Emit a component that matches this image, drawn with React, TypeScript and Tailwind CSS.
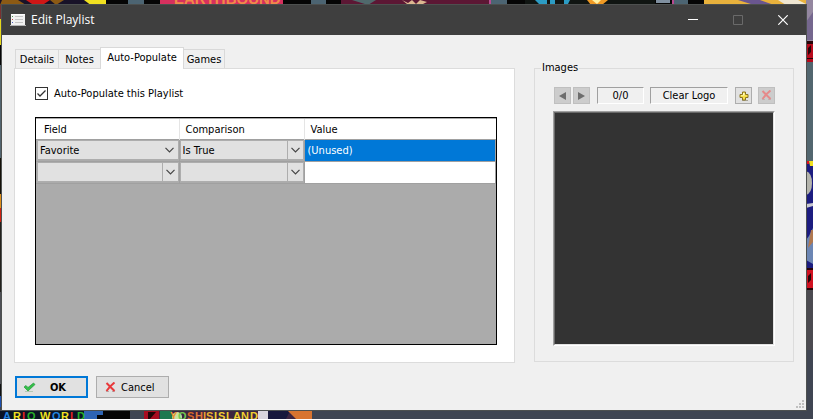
import React from 'react';

const CoverArt: React.FC = () => (
  <svg className="absolute inset-0 h-full w-full" viewBox="0 0 813 419" preserveAspectRatio="none" aria-hidden="true">
    <rect width="813" height="419" fill="#3f4552" />

    {/* covers along the top */}
    <rect width="813" height="6" fill="#050505" />
    <rect x="0" width="106" height="6" fill="#181228" />
    <path d="M2 0h16l8 5H0z" fill="#8c5a14" />
    <path d="M26 0h24l-6 4H32z" fill="#cf1616" />
    <path d="M50 0h14l-8 5z" fill="#8c5a14" />
    <path d="M84 0h22v6H92z" fill="#f0e020" />
    <rect x="128" width="16" height="6" fill="#4c6472" />
    <rect x="160" width="123" height="6" fill="#d6305e" />
    <text x="174" y="4" fontFamily="Liberation Sans" fontWeight="bold" fontSize="15" fill="#f08a4a">EARTHBOUND</text>
    <rect x="311" width="15" height="6" fill="#4c6472" />
    <rect x="341" width="150" height="6" fill="#5c1734" />
    <path d="M352 0h24l-8 5z" fill="#50696c" />
    <path d="M402 0l6 3 4-3 4 4 4-4 7 2-4 2h-16z" fill="#dcb890" />
    <rect x="491" width="16" height="6" fill="#4c6472" />
    <rect x="489" width="2" height="6" fill="#b84a90" />
    <rect x="525" width="130" height="6" fill="#101512" />
    <path d="M535 0h12v4h-8zM550 0h5v4h-5zM564 0h6l-2 4h-4z" fill="#2c9cc4" />
    <path d="M587 0h21l-6 5h-11z" fill="#f09a24" />
    <path d="M592 0h9l-4 4z" fill="#fff0a0" />
    <rect x="656" width="14" height="3" fill="#8090a0" />
    <rect x="672" width="2" height="6" fill="#b84a90" />
    <rect x="674" width="14" height="6" fill="#4c6472" />
    <rect x="704" width="109" height="6" fill="#e8b13c" />
    <path d="M738 0h22l14 5h-20z" fill="#6a5690" />
    <path d="M778 0h20l10 5h-22z" fill="#efe6d2" />

    {/* covers behind the left edge */}
    <rect y="5" width="2" height="14" fill="#7a3030" />
    <rect y="19" width="2" height="26" fill="#e6d81c" />
    <rect y="45" width="2" height="20" fill="#050505" />
    <rect y="65" width="2" height="93" fill="#52646f" />
    <rect y="158" width="2" height="36" fill="#141008" />
    <rect y="194" width="2" height="14" fill="#e0901a" />
    <rect y="208" width="2" height="14" fill="#d02010" />
    <rect y="222" width="2" height="70" fill="#22201c" />
    <rect y="292" width="2" height="92" fill="#4d4f55" />
    <rect y="384" width="2" height="12" fill="#101010" />
    <rect y="396" width="2" height="11" fill="#1c50b0" />

    {/* covers behind the right edge */}
    <rect x="806" width="7" height="41" fill="#9487a0" />
    <path d="M806 22l7-10v28h-7z" fill="#75678e" />
    <rect x="806" y="41" width="7" height="21" fill="#b80a1c" />
    <path d="M806 41h7v3h-7zM808 48l3-3v7l-3 3zM806 58h7v1h-7z" fill="#280408" />
    <rect x="806" y="62" width="7" height="99" fill="#52666f" />
    <rect x="806" y="161" width="7" height="107" fill="#1c1c80" />
    <path d="M806 161h3v3h-3z" fill="#e01020" />
    <path d="M809 161h4v5h-3z" fill="#f0e020" />
    <path d="M806 171q6 2 6 12t-6 12z" fill="#b4b4ac" />
    <path d="M806 204l7-1v3l-7 2z" fill="#c8c8d0" />
    <path d="M813 228l-4 8-3 4v20l7 4z" fill="#6c86b4" />
    <path d="M811 230h2v12l-5 6z" fill="#b07850" />
    <rect x="806" y="268" width="7" height="22" fill="#d01020" />
    <path d="M806 268h7v2h-7zM808 276l3-3v7l-3 3zM806 288h7v2h-7z" fill="#280408" />
    <rect x="806" y="290" width="7" height="60" fill="#4b4a50" />

    {/* covers along the bottom */}
    <rect y="411" width="87" height="8" fill="#0a1424" />
    <rect x="84" y="411" width="46" height="8" fill="#2e64b4" />
    <path d="M97 415h6v-4h27v8H97z" fill="#050505" />
    <rect x="144" y="411" width="168" height="8" fill="#3c2440" />
    <rect x="144" y="411" width="15" height="8" fill="#a80c20" />
    <path d="M148 412h8l-6 7h-2z" fill="#200408" />
    <rect x="160" y="411" width="12" height="8" fill="#1c7850" />
    <circle cx="177" cy="417" r="5" fill="#c4e49c" />
    <rect x="258" y="411" width="10" height="8" fill="#d8d4dc" />
    <path d="M268 411h22l-4 8h-18z" fill="#18183c" />
    <path d="M288 411h24v8h-16z" fill="#d87430" />
    <g fontFamily="Liberation Sans" fontWeight="bold" fontSize="11">
      <text y="420">
        <tspan x="3" fill="#2484e0">A</tspan>
        <tspan x="13" fill="#f0e020">R</tspan>
        <tspan x="22" fill="#e02020">I</tspan>
        <tspan x="27" fill="#28b028">O</tspan>
        <tspan x="40" fill="#f0e020">W</tspan>
        <tspan x="52" fill="#2484e0">O</tspan>
        <tspan x="61" fill="#f0e020">R</tspan>
        <tspan x="70" fill="#e02020">L</tspan>
        <tspan x="77" fill="#28b028">D</tspan>
      </text>
      <text y="420">
        <tspan x="170" fill="#e89030">Y</tspan>
        <tspan x="178" fill="#70c850">O</tspan>
        <tspan x="187" fill="#d86828">S</tspan>
        <tspan x="195" fill="#e07838">H</tspan>
        <tspan x="203" fill="#e8a030">I</tspan>
        <tspan x="206" fill="#e8b030">S</tspan>
        <tspan x="214" fill="#f0d030">I</tspan>
        <tspan x="218" fill="#f0d030">S</tspan>
        <tspan x="226" fill="#f0d030">L</tspan>
        <tspan x="233" fill="#f0d030">A</tspan>
        <tspan x="241" fill="#f0d030">N</tspan>
        <tspan x="250" fill="#f0d030">D</tspan>
      </text>
    </g>
  </svg>
);

const ListIcon: React.FC = () => (
  <svg width="16" height="14" viewBox="0 0 16 14" aria-hidden="true">
    <path d="M1 1h14v11H1z" fill="#f1f1f1" />
    <path d="M1 1h14v1H1z" fill="#ffffff" />
    <path d="M0 12h16v1H0z" fill="#b4b4b4" />
    <path d="M5 3.500h8M5 6.500h8M5 9.500h8" stroke="#c4c4c4" />
    <path d="M2 3h1v1H2z" fill="#4a9a4a" />
    <path d="M2 6h1v1H2z" fill="#c04040" />
    <path d="M2 9h1v1H2z" fill="#4a60c0" />
  </svg>
);

const CheckIcon: React.FC = () => (
  <svg width="13" height="11" viewBox="0 0 13 11" aria-hidden="true">
    <path d="M2 9.500h8" stroke="#b4c8b4" />
    <path d="M1 5l2-1.500 2 2L10.500 1 12 2.500 5 9z" fill="#34c048" stroke="#24983a" strokeWidth=".7" />
  </svg>
);

const CrossIcon: React.FC<{ faded?: boolean }> = ({ faded }) => (
  <svg width="11" height="11" viewBox="0 0 11 11" aria-hidden="true">
    <path d="M1 9.500h3M7 9.500h3" stroke={faded ? '#bdb5b5' : '#b8a8a8'} />
    <path d="M1.500 1l8 8M9.500 .5Q5 4 1.500 9" fill="none" stroke={faded ? '#e58a8a' : '#e8383a'} strokeWidth="2" />
  </svg>
);

const PlusIcon: React.FC = () => (
  <svg width="10" height="10" viewBox="0 0 10 10" aria-hidden="true">
    <path d="M3 9.500h6" stroke="#a8a494" />
    <path d="M3.500 1h3v2.500H9v3H6.500V9h-3V6.500H1v-3h2.500z" fill="#f7e04a" stroke="#8a7420" />
    <path d="M4 2h1.500v2.500H2V4h2z" fill="#fffbc0" />
  </svg>
);

type ComboProps = { label: string; value?: string; divider?: boolean };

const Combo: React.FC<ComboProps> = ({ label, value = '', divider = true }) => (
  <div className="relative h-5 border border-[#adadad] bg-[#e1e1e1]">
    <select aria-label={label} defaultValue={value} className="block h-full w-full appearance-none bg-transparent pt-0.5 pr-4 pl-0.5 outline-none">
      <option value={value}>{value}</option>
    </select>
    <span className={`pointer-events-none absolute inset-y-0 right-0 flex w-4 items-center justify-center ${divider ? 'border-l border-[#adadad]' : ''}`}>
      <svg width="9" height="6" viewBox="0 0 9 6" aria-hidden="true">
        <path d="M.5 .8l4 4 4-4" fill="none" stroke="#444" strokeWidth="1.200" />
      </svg>
    </span>
  </div>
);

const tabs = [
  { name: 'Details', width: 'w-[44px]' },
  { name: 'Notes', width: 'w-[41px]' },
  { name: 'Auto-Populate', width: 'w-[84px]' },
  { name: 'Games', width: 'w-[41px]' },
];

const Tabs: React.FC = () => (
  <div role="tablist" className="flex h-5 items-end pl-px">
    {tabs.map(({ name, width }) =>
      name === 'Auto-Populate' ? (
        <button key={name} role="tab" aria-selected="true" className={`relative -mb-px h-[22px] border border-b-0 border-[#d9d9d9] bg-white pb-0.5 ${width}`}>
          {name}
        </button>
      ) : (
        <button key={name} role="tab" aria-selected="false" className={`h-[19px] border border-b-0 border-[#d9d9d9] bg-[#f0f0f0] pt-px whitespace-nowrap not-first:border-l-0 nth-2:border-r-0 ${width}`}>
          {name}
        </button>
      )
    )}
  </div>
);

const RulesTable: React.FC = () => (
  <div className="h-[228px] border border-black bg-[#ababab] pt-px">
    <table className="w-full table-fixed border-collapse text-left">
      <thead>
        <tr className="h-5 border-b border-[#a0a0a0] bg-white">
          <th className="w-[143px] border-r border-[#e5e5e5] p-0 pt-0.5 pl-2 font-normal">Field</th>
          <th className="w-[125px] border-r border-[#e5e5e5] p-0 pt-0.5 pl-1.5 font-normal">Comparison</th>
          <th className="p-0 pt-0.5 pl-1.5 font-normal">Value</th>
        </tr>
      </thead>
      <tbody>
        <tr className="h-[22px] border-b border-[#a0a0a0]">
          <td className="border-r border-[#a0a0a0] p-0 pl-px"><Combo label="Field" value="Favorite" divider={false} /></td>
          <td className="border-r border-[#a0a0a0] p-0"><Combo label="Comparison" value="Is True" /></td>
          <td className="border-r border-[#a0a0a0] bg-[#0078d7] p-0 pt-px pl-[3px] text-white">(Unused)</td>
        </tr>
        <tr className="h-[22px] border-b border-[#a0a0a0]">
          <td className="border-r border-[#a0a0a0] p-0 pl-px"><Combo label="Field" /></td>
          <td className="border-r border-[#a0a0a0] p-0"><Combo label="Comparison" /></td>
          <td className="border-r border-[#a0a0a0] bg-white p-0"></td>
        </tr>
      </tbody>
    </table>
  </div>
);

const ImagesPanel: React.FC = () => (
  <fieldset className="h-[301px] w-[259px] border border-[#dcdcdc] px-[18px]">
    <legend className="-ml-3 px-px leading-[14px]">Images</legend>
    <div className="mt-3 flex h-[17px] items-stretch pl-px">
      <button aria-label="Previous" className="flex w-[17px] items-center justify-center border border-[#bfbfbf] bg-[#cccccc]">
        <svg width="7" height="8" viewBox="0 0 7 8"><path d="M7 0v8L0 4z" fill="#6d6d6d" /></svg>
      </button>
      <button aria-label="Next" className="ml-0.5 flex w-[17px] items-center justify-center border border-[#bfbfbf] bg-[#cccccc]">
        <svg width="7" height="8" viewBox="0 0 7 8"><path d="M0 0v8l7-4z" fill="#6d6d6d" /></svg>
      </button>
      <span className="ml-[7px] flex w-[47px] items-center justify-center border border-t-[#a0a0a0] border-r-white border-b-white border-l-[#a0a0a0] pt-px">0/0</span>
      <span className="ml-1.5 flex w-[78px] items-center justify-center border border-t-[#a0a0a0] border-r-white border-b-white border-l-[#a0a0a0] pt-px">Clear Logo</span>
      <button aria-label="Add image" className="ml-[7px] flex w-[17px] items-center justify-center border border-[#adadad] bg-[#e1e1e1]"><PlusIcon /></button>
      <button aria-label="Remove image" className="ml-1.5 flex w-[17px] items-center justify-center border border-[#bfbfbf] bg-[#cccccc]"><CrossIcon faded /></button>
    </div>
    <div className="mt-[7px] h-[235px] border border-t-[#a0a0a0] border-r-white border-b-white border-l-[#a0a0a0]">
      <div className="h-full border border-t-[#696969] border-r-[#e3e3e3] border-b-[#e3e3e3] border-l-[#696969] bg-[#333333]" />
    </div>
  </fieldset>
);

const TitleBar: React.FC = () => (
  <header className="flex h-[30px] items-center bg-[#3f3f3f] pl-2 text-white">
    <ListIcon />
    <h1 className="ml-[5px] flex-1 font-['Open_Sans',sans-serif] text-[12px]">Edit Playlist</h1>
    <button aria-label="Minimize" className="flex h-full w-[45px] items-center justify-center">
      <svg width="10" height="10" viewBox="0 0 10 10"><path d="M0 4.500h10" stroke="#fff" /></svg>
    </button>
    <button aria-label="Maximize" disabled className="flex h-full w-[45px] items-center justify-center">
      <svg width="10" height="10" viewBox="0 0 10 10"><path d="M.5 .5h9v9h-9z" fill="none" stroke="#6a6a6a" /></svg>
    </button>
    <button aria-label="Close" className="flex h-full w-[46px] items-center justify-center">
      <svg width="10" height="10" viewBox="0 0 10 10"><path d="M.3 .3l9.400 9.400M9.700 .3L.3 9.700" stroke="#fff" strokeWidth="1.200" /></svg>
    </button>
  </header>
);

export default function App() {
  return (
    <div className="relative min-h-screen overflow-hidden pt-1 pr-[6px] pb-2 pl-px font-['DejaVu_Sans_Condensed',sans-serif] text-[11px] leading-[14px] text-black">
      <CoverArt />
      <div className="relative border border-[#4d504f] bg-[#f0f0f0]">
        <TitleBar />
        <main className="flex gap-[19px] px-3 pt-[13px]">
          <section className="min-w-0 flex-1">
            <Tabs />
            <div className="border border-[#dcdcdc] bg-white pt-[18px] pr-[17px] pb-[17px] pl-5">
              <label className="mb-[17px] flex h-[13px] w-fit items-center gap-1.5">
                <input
                  type="checkbox"
                  defaultChecked
                  className="peer size-[13px] appearance-none border border-[#333] bg-white"
                />
                <svg className="pointer-events-none absolute hidden peer-checked:block" width="13" height="13" viewBox="0 0 13 13" aria-hidden="true">
                  <path d="M2.500 6.500L5 9l5.500-5.500" fill="none" stroke="#333" strokeWidth="1.300" />
                </svg>
                <span className="pt-px">Auto-Populate this Playlist</span>
              </label>
              <RulesTable />
            </div>
          </section>
          <aside className="pt-[13px]">
            <ImagesPanel />
          </aside>
        </main>
        <footer className="relative flex gap-2 px-[13px] pt-[13px] pb-3">
          <button className="flex h-[22px] w-[73px] items-center border-2 border-[#0078d7] bg-[#e1e1e1] pl-1.5 font-bold">
            <CheckIcon />
            <span className="flex-1 pt-px pr-1.5">OK</span>
          </button>
          <button className="flex h-[22px] w-[73px] items-center gap-[5px] border border-[#adadad] bg-[#e1e1e1] pl-2">
            <CrossIcon />
            <span className="pt-px">Cancel</span>
          </button>
          <svg className="absolute right-0.5 bottom-0.5" width="8" height="8" viewBox="0 0 8 8" aria-hidden="true">
            <path d="M6 0h2v2H6zM3 3h2v2H3zM6 3h2v2H6zM0 6h2v2H0zM3 6h2v2H3zM6 6h2v2H6z" fill="#bfbfbf" />
          </svg>
        </footer>
      </div>
    </div>
  );
}
